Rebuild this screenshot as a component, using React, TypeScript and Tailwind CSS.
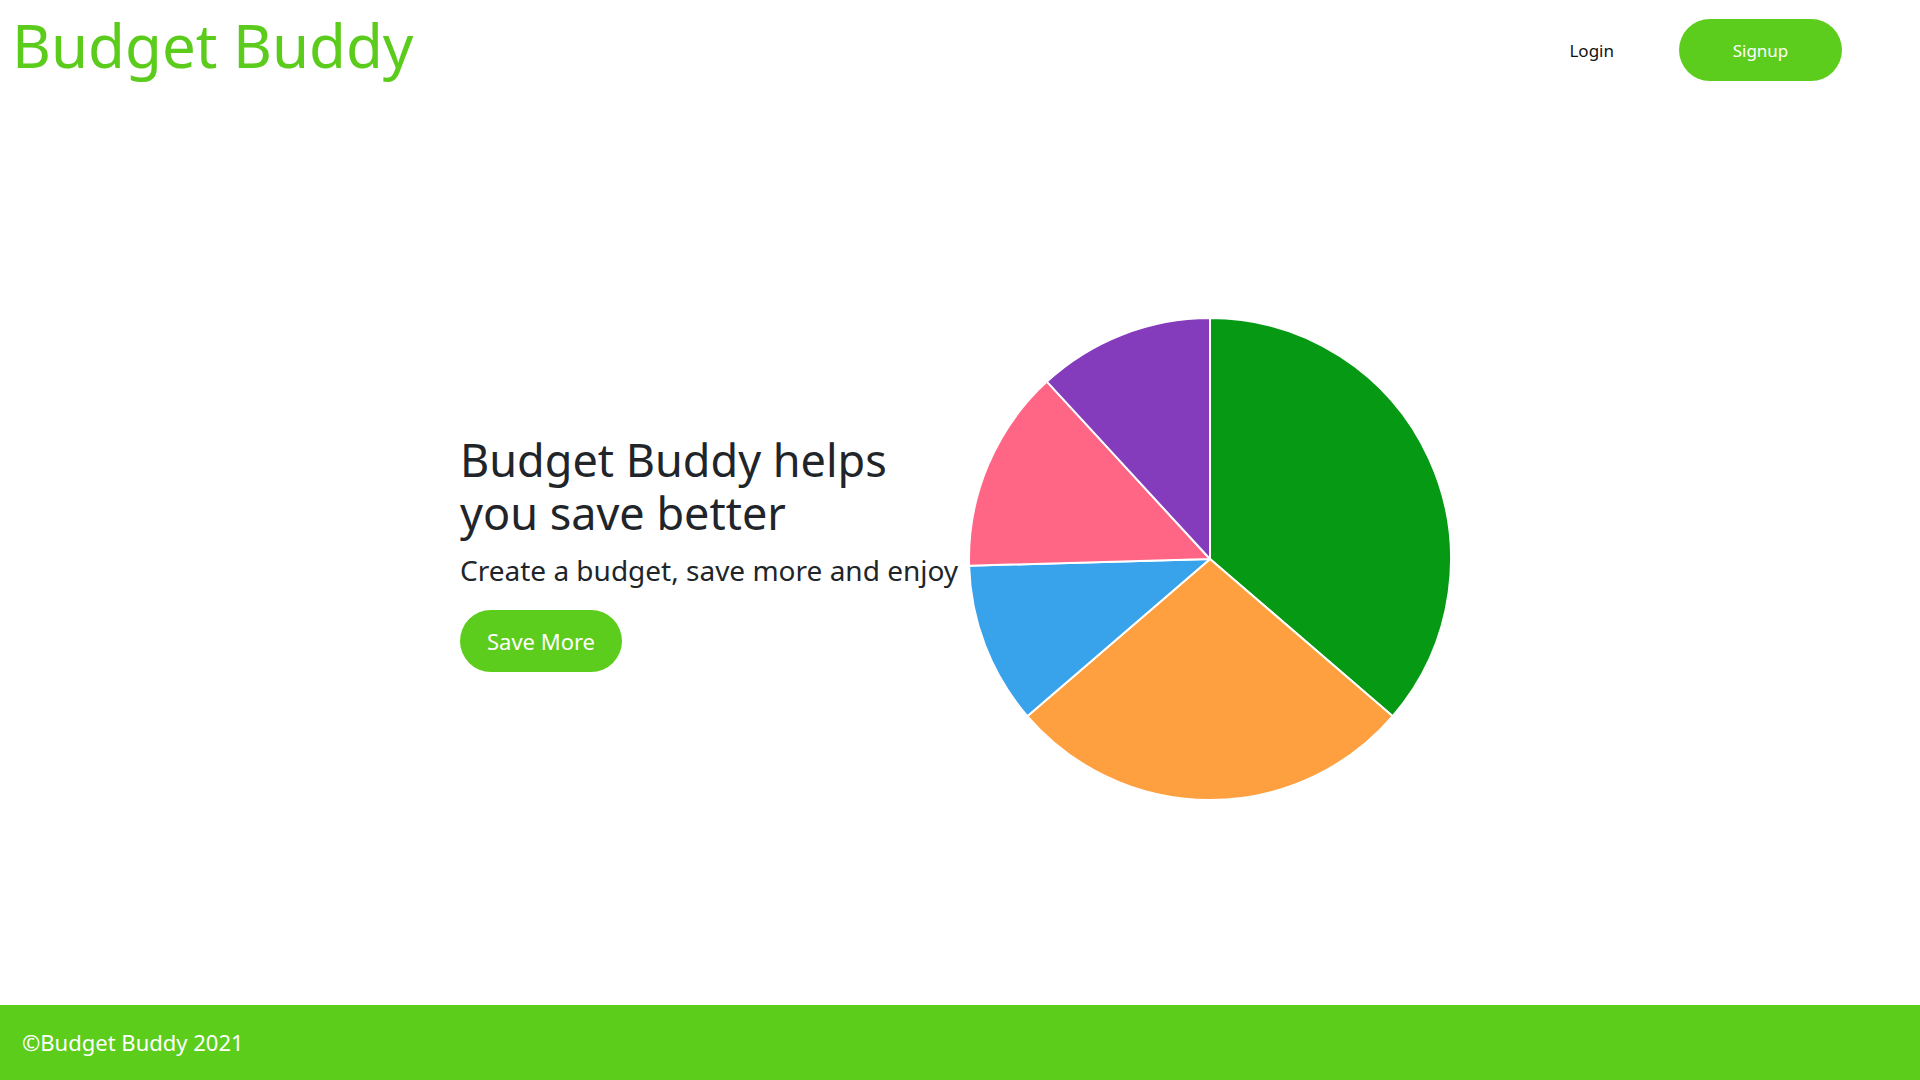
import React from "react";

const slices = [
  { from: -90, to: 40.7, color: "#069914" },
  { from: 40.7, to: 139.3, color: "#ffa040" },
  { from: 139.3, to: 178.4, color: "#38a2ea" },
  { from: 178.4, to: 227.4, color: "#ff6584" },
  { from: 227.4, to: 270, color: "#843cbd" },
];

function pt(cx: number, cy: number, r: number, deg: number) {
  const a = (deg * Math.PI) / 180;
  return [cx + r * Math.cos(a), cy + r * Math.sin(a)];
}

function Pie() {
  const cx = 242;
  const cy = 242;
  const r = 241;
  return (
    <svg width="484" height="484" viewBox="0 0 484 484" className="block mt-[12px]">
      {slices.map((s, i) => {
        const [x1, y1] = pt(cx, cy, r, s.from);
        const [x2, y2] = pt(cx, cy, r, s.to);
        const large = s.to - s.from > 180 ? 1 : 0;
        return (
          <path
            key={i}
            d={`M ${cx} ${cy} L ${x1} ${y1} A ${r} ${r} 0 ${large} 1 ${x2} ${y2} Z`}
            fill={s.color}
            stroke="#ffffff"
            strokeWidth={2}
            strokeLinejoin="round"
          />
        );
      })}
    </svg>
  );
}

export default function App() {
  return (
    <div
      className="min-h-screen flex flex-col bg-white"
      style={{ fontFamily: '"Noto Sans", "Open Sans", sans-serif' }}
    >
      <header className="h-[100px] flex items-start justify-between">
        <h1 className="pl-[12px] pt-[4px] text-[60px] leading-[normal] text-[#5ccc1c] font-normal">
          Budget Buddy
        </h1>
        <nav className="flex items-center mt-[19px] mr-[78px]">
          <a className="text-[17px] text-[#111] mr-[65px] pt-[2px] cursor-pointer">Login</a>
          <button className="w-[163px] h-[62px] pt-[2px] rounded-full bg-[#5ccd1c] text-white text-[17px]">
            Signup
          </button>
        </nav>
      </header>
      <main className="flex-1 flex items-center justify-center">
        <div className="flex items-center mr-[8px]">
          <div className="w-[508px] flex flex-col items-start text-[#212529]">
            <h2 className="text-[45px] leading-[1.18] font-normal">
              Budget Buddy helps
              <br />
              you save better
            </h2>
            <p className="mt-[12px] text-[28px] leading-[normal] whitespace-nowrap">
              Create a budget, save more and enjoy
            </p>
            <button className="mt-[21px] w-[162px] h-[62px] rounded-full bg-[#5ccd1c] text-white text-[22px]">
              Save More
            </button>
          </div>
          <Pie />
        </div>
      </main>
      <footer className="h-[75px] bg-[#5bcd1a] flex items-center pl-[22px]">
        <span className="text-white text-[22px]">©Budget Buddy 2021</span>
      </footer>
    </div>
  );
}
